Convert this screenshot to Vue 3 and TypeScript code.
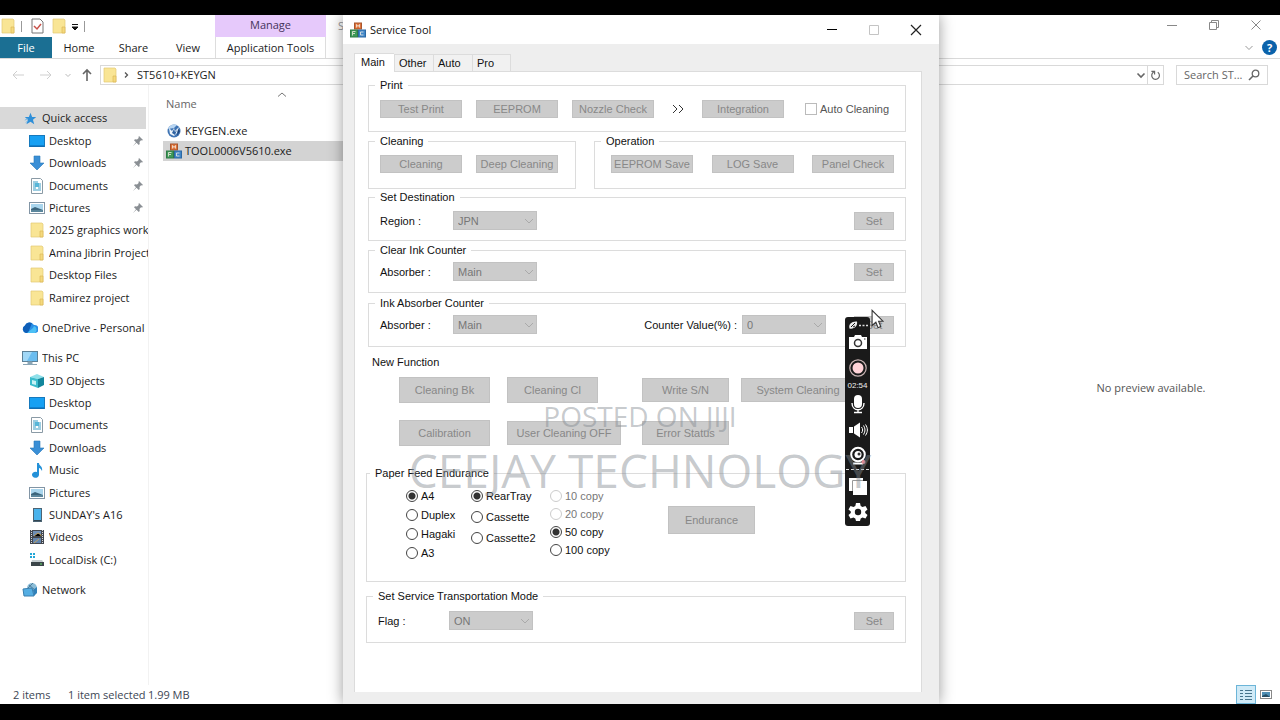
<script setup lang="ts">
import { ref } from 'vue'

interface NavItem { label: string; icon: string; pinned?: boolean }

const icons: Record<string, string> = {
  star: '<path d="M8 1l2 5 5 .2-4 3.300 1.600 5.500L8 12l-5 3 1.800-5.500L1 6.200 6 6z" fill="#2f8fd8"/><path d="M1 10l4-2M2 13l3-2" stroke="#5cb2ee"/>',
  desktop: '<rect x=".5" y="2.500" width="15" height="11" fill="#17a0f3" stroke="#1679bd"/><path d="M1 13h14" stroke="#0b62a8"/>',
  download: '<path d="M5 1h6v7h4l-7 7-7-7h4z" fill="#3a8fd6" stroke="#2a78ba" stroke-width=".6"/>',
  document: '<path d="M2.500.5h9l2 2v13h-11z" fill="#fff" stroke="#8a9aa5"/><path d="M4 4h5M4 6h8M4 8h3M9 8h3M4 10h3M9 10h3M4 12h8" stroke="#3a9cc4"/><rect x="6" y="5" width="4" height="4" fill="#58b6d8"/>',
  picture: '<rect x=".5" y="2.500" width="15" height="11" fill="#fff" stroke="#8295a5"/><rect x="2" y="4" width="12" height="8" fill="#a9d5ed"/><path d="M2 9l4-2 8 3v2H2z" fill="#3c657c"/><path d="M2 11h12" stroke="#7aa9bd"/>',
  folder: '<path d="M2 1h11l1 1v13H2z" fill="#f9e595" stroke="#e2c873" stroke-width=".7"/><path d="M11 9h3v6h-3z" fill="#f4d97d" stroke="#d8b451" stroke-width=".6"/>',
  cloud: '<path d="M4 13a4 4 0 0 1-1-7.500A5 5 0 0 1 12 5a4 4 0 0 1 1 8z" fill="#2a8fe6"/><path d="M3 5.500A5 5 0 0 1 10 3L6 13H4a4 4 0 0 1-1-7.500z" fill="#0f5fb8"/><path d="M12 6a4 4 0 0 1 1 7H5l6-5z" fill="#4cc0f5"/>',
  pc: '<rect x=".5" y="1.500" width="15" height="10" fill="#6bbdf0" stroke="#5c8198"/><path d="M1 2h9L5 11H1z" fill="#a1d8f7"/><path d="M6 12h4v2H6zM1 14.500h14" stroke="#8aa5b5" fill="#8aa5b5"/>',
  cube: '<path d="M1 4l7-3 7 3-6 2z" fill="#8fe0ea"/><path d="M1 4l8 2v9l-8-3z" fill="#3bbccc"/><path d="M9 6l6-2v8l-6 3z" fill="#12869c"/><path d="M3 7l4 1v4l-4-1z" fill="#c5f2f5"/>',
  music: '<path d="M8 1h2c0 3 4 3 3 8-1-2-2-3-3-3v7a3.500 3 0 1 1-2-3z" fill="#2491d8"/>',
  phone: '<rect x="4.500" y="1.500" width="8" height="13" fill="#4ab3ec" stroke="#4c6474"/><path d="M5 13.500h7" stroke="#324550"/>',
  video: '<path d="M1 1h14v14H1z" fill="#42474f"/><path d="M2.500 1v14M13.500 1v14" stroke="#d6d9dd" stroke-dasharray="1 1"/><rect x="4" y="2" width="8" height="5" fill="#6f8fb5"/><rect x="4" y="9" width="8" height="5" fill="#6385ad"/><path d="M5 7l4-3 3 2v1M5 14l5-4" stroke="#c2a15e"/>',
  disk: '<path d="M1 1h2v2H1zM4 1h2v2H4zM1 4h2v2H1zM4 4h2v2H4z" fill="#22a7d8"/><path d="M3 8h10l2 3H2z" fill="#c4cccf"/><rect x="2" y="10" width="13" height="4" fill="#3b4549"/><path d="M11 12h2" stroke="#6be06f"/>',
  network: '<circle cx="10" cy="6" r="5" fill="#8bbdd8"/><path d="M7 3l6 5M6 6l5-5" stroke="#527f9c"/><path d="M1 7l9-1 2 8H2z" fill="#55aee3" stroke="#3a7fae"/><path d="M11 8l4-3v6l-3 3z" fill="#3181b9"/>',
  globe: '<circle cx="8" cy="8" r="6.500" fill="#3f74b4"/><path d="M2 6a6.500 6.500 0 0 1 9-4L8 5z" fill="#b9d6f2"/><path d="M3 5l3 3 2-3 1 3 4-4-2 6-3 3-4-2z" fill="#eef5fb"/><path d="M8 6l1 3 2-2-2 5-3-2z" fill="#2f63a2"/><path d="M12 6l2 2-3 5z" fill="#1f4478"/>',
  blocks: '<rect x="4.500" y="1" width="7" height="6" fill="#e0743a" stroke="#a8562e"/><rect x=".5" y="8" width="7" height="7" fill="#3f9a58" stroke="#2f7a46"/><rect x="8.500" y="8" width="7" height="7" fill="#3f86c8" stroke="#2c68a3"/><path d="M6.500 5.500v-3l1.500 2 1.500-2v3M2.500 13.500v-4h3M3 11.500h2M13.500 10h-3v3h3" stroke="#f3ece2" stroke-width=".8" fill="none"/>',
}

const quick: NavItem[] = [
  { label: 'Desktop', icon: 'desktop', pinned: true },
  { label: 'Downloads', icon: 'download', pinned: true },
  { label: 'Documents', icon: 'document', pinned: true },
  { label: 'Pictures', icon: 'picture', pinned: true },
  { label: '2025 graphics work', icon: 'folder' },
  { label: 'Amina Jibrin Project', icon: 'folder' },
  { label: 'Desktop Files', icon: 'folder' },
  { label: 'Ramirez project', icon: 'folder' },
]
const pc: NavItem[] = [
  { label: '3D Objects', icon: 'cube' },
  { label: 'Desktop', icon: 'desktop' },
  { label: 'Documents', icon: 'document' },
  { label: 'Downloads', icon: 'download' },
  { label: 'Music', icon: 'music' },
  { label: 'Pictures', icon: 'picture' },
  { label: "SUNDAY's A16", icon: 'phone' },
  { label: 'Videos', icon: 'video' },
  { label: 'LocalDisk (C:)', icon: 'disk' },
]

const paper = ref('A4')
const tray = ref('RearTray')
const copies = ref('50 copy')
const papers = ['A4', 'Duplex', 'Hagaki', 'A3']
const trays = ['RearTray', 'Cassette', 'Cassette2']
const copyOptions = [
  { label: '10 copy', off: true },
  { label: '20 copy', off: true },
  { label: '50 copy', off: false },
  { label: '100 copy', off: false },
]
const tabs = ['Main', 'Other', 'Auto', 'Pro']
const activeTab = ref('Main')
</script>

<template>
  <div class="screen">
    <div class="desktop">
      <section class="explorer">
        <header class="caption">
          <div class="quickbar">
            <svg class="ico" viewBox="0 0 16 16" v-html="icons.folder"></svg>
            <i class="bar"></i>
            <svg class="ico check" viewBox="0 0 16 16"><path d="M3 1h8l3 3v11H3z" fill="#fff" stroke="#777" /><path d="M5 8l3 3 4-5" fill="none" stroke="#c8524a" stroke-width="1.500" /></svg>
            <svg class="ico" viewBox="0 0 16 16" v-html="icons.folder"></svg>
            <svg class="mini" viewBox="0 0 8 8"><path d="M1 1.500h6M1 4h6L4 7z" fill="#111" stroke="#111" /></svg>
            <i class="bar"></i>
          </div>
          <div class="manage">Manage</div>
          <div class="folder-title">ST5610+KEYGN</div>
          <div class="winbtns">
            <button aria-label="Minimize"><svg viewBox="0 0 12 12"><path d="M1 6.500h10" /></svg></button>
            <button aria-label="Restore"><svg viewBox="0 0 12 12"><path d="M1.500 3.500h7v7h-7zM3.500 3.500v-2h7v7h-2" /></svg></button>
            <button aria-label="Close"><svg viewBox="0 0 12 12"><path d="M1.500 1.500l9 9M10.500 1.500l-9 9" /></svg></button>
          </div>
        </header>

        <nav class="ribbon">
          <button class="file">File</button>
          <button class="rt home">Home</button>
          <button class="rt share">Share</button>
          <button class="rt view">View</button>
          <button class="apptools">Application Tools</button>
          <div class="ribbon-end">
            <svg class="chev" viewBox="0 0 10 10"><path d="M1.500 3L5 6.500 8.500 3" fill="none" stroke="#999" /></svg>
            <button class="help" aria-label="Help">?</button>
          </div>
        </nav>

        <div class="address-row">
          <svg class="arrow" viewBox="0 0 14 14"><path d="M13 7H2M6 3L2 7l4 4" fill="none" stroke="#cfcfcf" /></svg>
          <svg class="arrow second" viewBox="0 0 14 14"><path d="M1 7h11M8 3l4 4-4 4" fill="none" stroke="#cfcfcf" /></svg>
          <svg class="tiny" viewBox="0 0 8 8"><path d="M1.500 3L4 5.500 6.500 3" fill="none" stroke="#bbb" /></svg>
          <svg class="arrow up" viewBox="0 0 14 14"><path d="M7 13V2M3 6l4-4 4 4" fill="none" stroke="#666" stroke-width="1.600" /></svg>
          <div class="address">
            <svg class="ico" viewBox="0 0 16 16" v-html="icons.folder"></svg>
            <svg class="tiny" viewBox="0 0 8 8"><path d="M3 1.500L5.500 4 3 6.500" fill="none" stroke="#555" stroke-width="1.300" /></svg>
            <span class="path">ST5610+KEYGN</span>
            <svg class="drop" viewBox="0 0 10 10"><path d="M1.500 3.500L5 7l3.500-3.500" fill="none" stroke="#666" stroke-width="1.600" /></svg>
            <button class="refresh" aria-label="Refresh"><svg viewBox="0 0 12 12"><path d="M8.500 2.500A4.200 4.200 0 1 1 4 2.300M1.500 1.500H5V5" fill="none" stroke="#666" stroke-width="1.300" /></svg></button>
          </div>
          <label class="search">
            <input type="text" placeholder="Search ST..." aria-label="Search" />
            <svg viewBox="0 0 12 12"><circle cx="7.500" cy="4.500" r="3.300" fill="none" stroke="#666" stroke-width="1.300" /><path d="M5 7L1 11" stroke="#666" stroke-width="1.600" /></svg>
          </label>
        </div>

        <div class="body">
          <aside class="tree">
            <div class="group g9">
              <a href="#" class="node root on"><svg class="ico s" viewBox="0 0 16 16" v-html="icons.star"></svg><span>Quick access</span></a>
              <a v-for="n in quick" :key="n.label" href="#" class="node">
                <svg class="ico" viewBox="0 0 16 16" v-html="icons[n.icon]"></svg><span>{{ n.label }}</span>
                <svg v-if="n.pinned" class="pin" viewBox="0 0 10 10"><path d="M6 0l4 4-1 .5-1-.2L6.500 6l.2 2-.9 1L3.500 6.800 0 10l3-3.700L1 4.200l1-.9 2 .2L5.700 2 5.500 1z" fill="#8a8f94" /></svg>
              </a>
            </div>
            <a href="#" class="node root"><svg class="ico" viewBox="0 0 16 16" v-html="icons.cloud"></svg><span>OneDrive - Personal</span></a>
            <div class="group g10">
              <a href="#" class="node root"><svg class="ico" viewBox="0 0 16 16" v-html="icons.pc"></svg><span>This PC</span></a>
              <a v-for="n in pc" :key="n.label" href="#" class="node">
                <svg class="ico" viewBox="0 0 16 16" v-html="icons[n.icon]"></svg><span>{{ n.label }}</span>
              </a>
            </div>
            <a href="#" class="node root"><svg class="ico" viewBox="0 0 16 16" v-html="icons.network"></svg><span>Network</span></a>
          </aside>

          <div class="files">
            <div class="head"><span>Name</span><svg viewBox="0 0 10 10"><path d="M1 6.500L5 3l4 3.500" fill="none" stroke="#777" /></svg></div>
            <div class="frow"><svg class="ico f" viewBox="0 0 16 16" v-html="icons.globe"></svg>KEYGEN.exe</div>
            <div class="frow sel"><svg class="ico f" viewBox="0 0 16 16" v-html="icons.blocks"></svg>TOOL0006V5610.exe</div>
          </div>
          <div class="preview">No preview available.</div>
        </div>

        <footer class="status">
          <span class="s1">2 items</span><span class="s2">1 item selected</span><span>1.99 MB</span>
          <div class="views">
            <button class="v on" aria-label="Details"><svg viewBox="0 0 14 12"><path d="M1 1.500h3M1 4.500h3M1 7.500h3M1 10.500h3M6 1.500h7M6 4.500h7M6 7.500h7M6 10.500h7" stroke="#46748c" /></svg></button>
            <button class="v" aria-label="Large icons"><svg viewBox="0 0 14 12"><rect x="1.500" y="1.500" width="11" height="8" fill="#fff" stroke="#888" /><rect x="3" y="3" width="8" height="5" fill="#4f8fb5" /><path d="M3 7l4-2 4 3H3z" fill="#254e66" /></svg></button>
          </div>
        </footer>
      </section>

      <section class="dialog">
        <header class="dtitle">
          <svg class="ico" viewBox="0 0 16 16" v-html="icons.blocks"></svg>
          <span>Service Tool</span>
          <div class="dbtns">
            <button aria-label="Minimize"><svg viewBox="0 0 12 12"><path d="M1 5.500h10" stroke="#000" /></svg></button>
            <button aria-label="Maximize" disabled><svg viewBox="0 0 12 12"><path d="M1.500 1.500h9v9h-9z" fill="none" stroke="#c4c4c4" /></svg></button>
            <button aria-label="Close"><svg viewBox="0 0 12 12"><path d="M1 1l10 10M11 1L1 11" stroke="#222" stroke-width="1.200" /></svg></button>
          </div>
        </header>

        <div class="dbody">
          <div class="tabs" role="tablist">
            <button v-for="t in tabs" :key="t" role="tab" :class="['tab', { active: t === activeTab }]" @click="activeTab = t">{{ t }}</button>
          </div>
          <div class="panel">
            <fieldset class="box print">
              <legend>Print</legend>
              <div class="line">
                <button class="btn" disabled>Test Print</button>
                <button class="btn" disabled>EEPROM</button>
                <button class="btn" disabled>Nozzle Check</button>
                <svg class="more" viewBox="0 0 20 14"><path d="M5 3l4 4-4 4M11 3l4 4-4 4" fill="none" stroke="#333" /></svg>
                <button class="btn" disabled>Integration</button>
                <label class="auto"><input type="checkbox" disabled />Auto Cleaning</label>
              </div>
            </fieldset>

            <div class="pair">
              <fieldset class="box clean">
                <legend>Cleaning</legend>
                <div class="line">
                  <button class="btn" disabled>Cleaning</button>
                  <button class="btn" disabled>Deep Cleaning</button>
                </div>
              </fieldset>
              <fieldset class="box oper">
                <legend>Operation</legend>
                <div class="line spread">
                  <button class="btn" disabled>EEPROM Save</button>
                  <button class="btn" disabled>LOG Save</button>
                  <button class="btn" disabled>Panel Check</button>
                </div>
              </fieldset>
            </div>

            <fieldset class="box dest">
              <legend>Set Destination</legend>
              <div class="line tight">
                <label class="name" for="region">Region :</label>
                <span class="combo"><select id="region" disabled><option>JPN</option></select><svg viewBox="0 0 10 10"><path d="M1 3l4 4 4-4" /></svg></span>
                <button class="btn set" disabled>Set</button>
              </div>
            </fieldset>

            <fieldset class="box clear">
              <legend>Clear Ink Counter</legend>
              <div class="line tight">
                <label class="name" for="absorber1">Absorber :</label>
                <span class="combo"><select id="absorber1" disabled><option>Main</option></select><svg viewBox="0 0 10 10"><path d="M1 3l4 4 4-4" /></svg></span>
                <button class="btn set" disabled>Set</button>
              </div>
            </fieldset>

            <fieldset class="box ink">
              <legend>Ink Absorber Counter</legend>
              <div class="line tight">
                <label class="name" for="absorber2">Absorber :</label>
                <span class="combo"><select id="absorber2" disabled><option>Main</option></select><svg viewBox="0 0 10 10"><path d="M1 3l4 4 4-4" /></svg></span>
                <label class="counter" for="counter">Counter Value(%) :</label>
                <span class="combo"><select id="counter" disabled><option>0</option></select><svg viewBox="0 0 10 10"><path d="M1 3l4 4 4-4" /></svg></span>
                <button class="btn set near" disabled>Set</button>
              </div>
            </fieldset>

            <h2 class="newfn">New Function</h2>
            <div class="fns">
              <button class="btn tall" disabled>Cleaning Bk</button>
              <button class="btn tall" disabled>Cleaning Cl</button>
              <button class="btn mid" disabled>Write S/N</button>
              <button class="btn wide" disabled>System Cleaning</button>
              <button class="btn tall" disabled>Calibration</button>
              <button class="btn wide" disabled>User Cleaning OFF</button>
              <button class="btn mid" disabled>Error Status</button>
            </div>

            <fieldset class="box feed">
              <legend>Paper Feed Endurance</legend>
              <div class="radios">
                <div class="col c1">
                  <label v-for="p in papers" :key="p"><input v-model="paper" type="radio" name="paper" :value="p" />{{ p }}</label>
                </div>
                <div class="col c2">
                  <label v-for="t in trays" :key="t"><input v-model="tray" type="radio" name="tray" :value="t" />{{ t }}</label>
                </div>
                <div class="col c3">
                  <label v-for="c in copyOptions" :key="c.label" :class="{ off: c.off }"><input v-model="copies" type="radio" name="copies" :value="c.label" :disabled="c.off" />{{ c.label }}</label>
                </div>
                <button class="btn endurance" disabled>Endurance</button>
              </div>
            </fieldset>

            <fieldset class="box transport">
              <legend>Set Service Transportation Mode</legend>
              <div class="line tight">
                <label class="name" for="flag">Flag :</label>
                <span class="combo"><select id="flag" disabled><option>ON</option></select><svg viewBox="0 0 10 10"><path d="M1 3l4 4 4-4" /></svg></span>
                <button class="btn set" disabled>Set</button>
              </div>
            </fieldset>
          </div>
        </div>

        <div class="recorder">
          <svg class="r-top" viewBox="0 0 20 10"><path d="M1.500 8.500C0 4 4 1 9 1.500 10 6 6 9.500 1.500 8.500z" fill="#eee" /><path d="M3 7l4-4M5 7l2-1" stroke="#1a1a1a" /><path d="M11 5.500h2M14.500 5.500h2M18 5.500h2" stroke="#ddd" stroke-width="1.500" /></svg>
          <button aria-label="Screenshot"><svg viewBox="0 0 20 20"><path d="M1 5h5l1-2h6l1 2h5v12H1z" fill="#fff" /><circle cx="10" cy="11" r="3.500" fill="#fff" stroke="#333" stroke-width="1.500" /><path d="M16 7h1.500" stroke="#333" /></svg></button>
          <button aria-label="Record"><svg viewBox="0 0 20 20"><circle cx="10" cy="10" r="8.200" fill="#1a1a1a" stroke="#c9b4b4" stroke-width="1.200" /><circle cx="10" cy="10" r="5.500" fill="#ffd3d8" /></svg></button>
          <span class="time">02:54</span>
          <button aria-label="Microphone"><svg viewBox="0 0 20 20"><rect x="6" y="1" width="8" height="13" rx="4" fill="#fff" /><path d="M4 9c0 9 12 9 12 0M10 15v3M6 18.500h8" fill="none" stroke="#fff" stroke-width="1.400" /></svg></button>
          <button aria-label="Speaker"><svg viewBox="0 0 20 20"><path d="M1 7h4v6H1zM6 6.500l6-4v15l-6-4z" fill="#fff" /><path d="M13.500 7c1.500 2 1.500 4 0 6M15.500 5.500c2 3 2 6 0 9M17.500 4.500c2.500 4 2.500 7 0 11" fill="none" stroke="#fff" /></svg></button>
          <button aria-label="Webcam"><svg viewBox="0 0 20 20"><circle cx="10" cy="8.500" r="6.800" fill="#1a1a1a" stroke="#fff" stroke-width="2" /><circle cx="10" cy="8.500" r="3.500" fill="#fff" /><circle cx="11" cy="8" r="1.500" fill="#333" /><path d="M5 17.500h10" stroke="#fff" stroke-width="2" /><circle cx="15.500" cy="16" r="2" fill="#e58a94" /></svg></button>
          <i class="dash"></i>
          <button aria-label="Windows"><svg viewBox="0 0 20 20"><path d="M1 2h14v3H4v10H1z" fill="#fff" /><path d="M5 5h14v14H5z" fill="#fff" /><path d="M4.500 15V4.500H15" fill="none" stroke="#999" /></svg></button>
          <button aria-label="Settings"><svg viewBox="0 0 20 20"><path d="M8 1h4l.7 3 1.800 1 3-1 2 3.500-2.300 2v1.600l2.300 2-2 3.400-3-.9-1.800 1L12 19H8l-.7-2.400-1.800-1-3 .9-2-3.400 2.300-2V9.500l-2.300-2L2.500 4l3 1 1.800-1z" fill="#fff" /><circle cx="10" cy="10" r="3.200" fill="#1a1a1a" /></svg></button>
        </div>
        <svg class="cursor" viewBox="0 0 12 18"><path d="M1 1v14l3.500-3 2 5 2.500-1-2-5h4z" fill="#fff" stroke="#333" /></svg>
      </section>

      <div class="mark">
        <div class="m1">POSTED ON JIJI</div>
        <div class="m2">CEEJAY TECHNOLOGY</div>
      </div>
    </div>
  </div>
</template>

<style>
body { margin: 0; background: #000; }
</style>

<style scoped>
* { box-sizing: border-box; }
button, input, select { font: inherit; color: inherit; margin: 0; padding: 0; border: 0; background: none; border-radius: 0; }
svg { display: block; flex: none; }
.screen { min-height: 100vh; padding: 15px 0 16px; background: #000; display: flex; flex-direction: column; }
.desktop { position: relative; flex: 1; display: flex; overflow: hidden; }
.explorer { flex: 1; display: flex; flex-direction: column; background: #fff; font: 11px/16px "Open Sans", "Noto Sans", sans-serif; color: #1b1b1b; min-width: 0; }
.ico { width: 16px; height: 16px; }

.caption { display: flex; height: 22px; }
.quickbar { width: 215px; display: flex; align-items: center; }
.bar { width: 1px; height: 11px; background: #999; margin: 0 7px 0 5px; }
.quickbar .check { margin-right: 6px; }
.mini { width: 8px; height: 8px; margin: 2px 0 0 4px; }
.manage { width: 111px; background: #e6c9fb; text-align: center; line-height: 19px; color: #45325a; }
.folder-title { margin-left: 12px; line-height: 22px; color: #999; flex: 1; }
.winbtns { display: flex; margin-right: 3px; }
.winbtns button { width: 42px; display: grid; place-items: center; padding-bottom: 3px; }
.winbtns svg { width: 12px; height: 12px; fill: none; stroke: #888; }

.ribbon { display: flex; height: 22px; border-bottom: 1px solid #d9d9d9; }
.ribbon .file { width: 52px; background: #1b6f93; color: #fff; }
.rt { width: 54px; }
.share { width: 55px; }
.apptools { width: 111px; border-left: 1px solid #ddd; border-right: 1px solid #ddd; }
.ribbon-end { margin-left: auto; display: flex; align-items: center; gap: 8px; padding-right: 3px; }
.chev { width: 10px; height: 10px; }
.help { width: 15px; height: 15px; border-radius: 8px; background: #0a62ab; color: #fff; font-weight: 700; line-height: 15px; }

.address-row { display: flex; align-items: center; padding: 6px 12px 0 11px; }
.arrow { width: 14px; height: 14px; }
.arrow.second { margin-left: 14px; }
.arrow.second + .tiny { margin: 0 8px 0 11px; }
.tiny { width: 8px; height: 8px; }
.address { flex: 1; height: 20px; margin-left: 6px; border: 1px solid #d9d9d9; display: flex; align-items: center; padding-left: 1px; }
.address .tiny { margin: 0 7px 0 4px; }
.path { flex: 1; }
.drop { width: 10px; height: 10px; margin-right: 1px; }
.refresh { width: 16px; align-self: stretch; border-left: 1px solid #d9d9d9; display: grid; place-items: center; }
.refresh svg { width: 11px; height: 11px; }
.search { width: 92px; height: 20px; margin-left: 12px; border: 1px solid #d9d9d9; display: flex; align-items: center; padding: 0 7px; }
.search input { flex: 1; min-width: 0; outline: 0; }
.search input::placeholder { color: #666; opacity: 1; }
.search svg { width: 12px; height: 12px; }

.body { flex: 1; display: flex; }
.tree { width: 149px; padding-top: 22px; border-right: 1px solid #f2f2f2; display: flex; flex-direction: column; gap: 8px; }
.group { display: grid; grid-auto-rows: 1fr; }
.g9 { min-height: 202px; }
.g10 { min-height: 224px; }
.node { display: flex; align-items: center; min-height: 22px; padding-left: 29px; gap: 4px; color: inherit; text-decoration: none; white-space: nowrap; overflow: hidden; }
.node.root { padding-left: 22px; }
.node.on { background: #d9d9d9; margin-right: 2px; }
.node span { flex: 1; min-width: 0; overflow: hidden; }
.node .s { width: 13px; height: 13px; margin: 0 1px 0 2px; }
.pin { width: 10px; height: 10px; margin-right: 5px; }
.files { flex: 1; padding: 8px 0 0 14px; }
.head { display: flex; padding-left: 3px; color: #666; margin-bottom: 6px; }
.head span { width: 111px; line-height: 22px; }
.head svg { width: 10px; height: 10px; margin-top: -3px; }
.frow { display: flex; align-items: center; gap: 3px; height: 20px; width: 400px; padding-left: 3px; }
.frow.sel { background: #d3d3d3; }
.preview { width: 258px; padding-top: 6px; display: grid; place-items: center; color: #555; }
.status { display: flex; align-items: center; height: 19px; padding-left: 13px; color: #3d4654; }
.s1 { width: 55px; }
.s2 { width: 80px; }
.views { margin-left: auto; display: flex; padding-right: 4px; }
.v { width: 20px; height: 19px; display: grid; place-items: center; border: 1px solid transparent; }
.v.on { background: #cfeaf7; border-color: #6cb5d8; }
.v svg { width: 14px; height: 12px; }

.dialog { position: absolute; top: 0; bottom: 0; left: 343px; right: 341px; background: #eee; display: flex; flex-direction: column; box-shadow: 0 0 14px rgba(0, 0, 0, .4); font: 11px/14px "Liberation Sans", Arial, sans-serif; color: #111; }
.dtitle { display: flex; align-items: center; height: 29px; background: #fff; padding-left: 7px; gap: 4px; font: 11px/16px "Open Sans", sans-serif; }
.dbtns { margin-left: auto; display: flex; padding-right: 2px; }
.dbtns button { width: 42px; height: 28px; display: grid; place-items: center; }
.dbtns svg { width: 12px; height: 12px; }
.dbody { flex: 1; display: flex; flex-direction: column; padding: 9px 17px 12px 11px; }
.tabs { display: flex; align-items: flex-end; height: 18px; }
.tab { width: 39px; height: 17px; border: 1px solid #dcdcdc; border-width: 1px 0 0 1px; background: #f1f1f1; text-align: left; padding-left: 4px; }
.tab:last-child { border-right-width: 1px; }
.tab.active { width: 40px; height: 19px; background: #fff; margin-bottom: -1px; z-index: 1; padding: 0 0 2px 6px; }
.panel { flex: 1; background: #fff; border: 1px solid #dcdcdc; border-bottom: 0; padding: 6px 15px 0 11px; }
.box { margin: 0; min-width: 0; border: 1px solid #dcdcdc; padding: 0 11px; }
.box legend { padding: 0 5px; margin-left: -5px; line-height: 14px; }
.line { display: flex; align-items: center; gap: 14px; }
.line.tight { gap: 0; }
.spread { justify-content: space-between; gap: 8px; }
.btn { width: 82px; height: 18px; flex: none; background: #ccc; border: 1px solid #c2c2c2; color: #888; line-height: 14px; white-space: nowrap; }
.btn.set { width: 40px; margin-left: auto; }
.btn.near { margin-left: 28px; }
.more { width: 20px; height: 14px; }
.auto { display: flex; align-items: center; gap: 3px; margin-left: 7px; color: #555; }
.auto input { appearance: none; width: 12px; height: 12px; border: 1px solid #bbb; background: #fff; }
.print, .clean, .dest, .clear, .ink { margin-left: 2px; }
.print { padding-top: 8px; padding-bottom: 13px; }
.pair { display: flex; justify-content: space-between; margin-top: 2px; }
.clean { width: 208px; padding-top: 7px; padding-bottom: 15px; }
.oper { width: 312px; padding: 7px 11px 15px 16px; }
.oper legend { margin-left: -10px; }
.dest { margin-top: 1px; padding-top: 7px; padding-bottom: 10px; }
.clear { margin-top: 2px; padding-top: 5px; padding-bottom: 11px; }
.ink { margin-top: 3px; padding-top: 5px; padding-bottom: 12px; }
.name { width: 73px; }
.combo { position: relative; width: 84px; height: 19px; }
.combo select { appearance: none; width: 100%; height: 100%; padding-left: 4px; background: #ccc; border: 1px solid #c2c2c2; color: #777; opacity: 1; line-height: 14px; }
.combo svg { position: absolute; right: 3px; top: 5px; width: 10px; height: 10px; fill: none; stroke: #aaa; pointer-events: none; }
.counter { margin-left: auto; margin-right: 5px; }
.newfn { font: inherit; margin: 8px 0 0 6px; }
.fns { display: grid; grid-template-columns: 108px 135px 99px 1fr; grid-auto-rows: 26px; row-gap: 17px; align-items: center; margin: 8px 0 20px 33px; }
.tall { width: 91px; height: 26px; }
.mid { width: 87px; height: 24px; }
.wide { width: 114px; height: 24px; }
.feed { padding: 9px 11px 21px 8px; }
.radios { display: flex; align-items: flex-start; padding-left: 31px; }
.col { display: flex; flex-direction: column; }
.col label { display: flex; align-items: center; gap: 3px; height: 14px; white-space: nowrap; }
.col input { appearance: none; width: 12px; height: 12px; border: 1px solid #444; border-radius: 50%; background: #fff; }
.col input:checked { background: radial-gradient(circle, #333 0 3px, #fff 4px); }
.col .off { color: #777; }
.col .off input { border-color: #ccc; }
.c1 { width: 65px; gap: 5px; }
.c2 { width: 79px; gap: 7px; }
.c3 { width: 118px; gap: 4px; }
.endurance { width: 87px; height: 28px; margin-top: 17px; }
.transport { margin-top: 7px; padding: 8px 11px 12px; }
.transport .name { width: 71px; }

.recorder { position: absolute; top: 302px; right: 69px; width: 25px; padding: 3px 2px 4px; background: #1a1a1a; border-radius: 3px; display: flex; flex-direction: column; align-items: center; gap: 6px; color: #eee; }
.recorder button, .recorder button svg { width: 20px; height: 20px; }
.recorder button { display: block; }
.r-top { width: 20px; height: 10px; margin-bottom: -4px; }
.time { font: 8px/8px "Liberation Sans", sans-serif; margin: -2px 0; }
.dash { width: 23px; border-top: 1px dashed #ddd; margin: -3px 0 0; }
.cursor { position: absolute; top: 294px; right: 55px; width: 13px; height: 20px; }
.mark { position: absolute; top: 381px; left: 0; right: 0; text-align: center; color: rgba(130, 137, 144, .45); font-family: "Open Sans", sans-serif; pointer-events: none; white-space: nowrap; }
.m1 { font-size: 28px; line-height: 40px; }
.m2 { font-size: 46px; line-height: 68px; }
</style>
